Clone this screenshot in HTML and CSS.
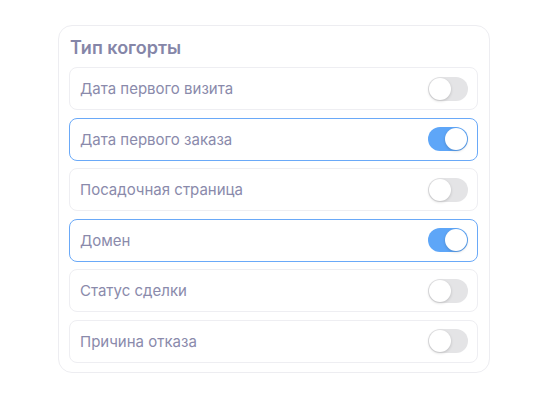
FILE: index.html
```html
<!DOCTYPE html>
<html lang="ru">
<head>
    <meta charset="UTF-8">
    <meta name="viewport" content="width=device-width, initial-scale=1.0">
    <title>Тип когорты</title>
    <link rel="stylesheet" href="styles.css">
</head>
<body>
    <div class="panel">
        <h2>Тип когорты</h2>
        <div class="option-list">
            <div class="option">
                <span>Дата первого визита</span>
                <span class="switch"></span>
            </div>
            <div class="option active">
                <span>Дата первого заказа</span>
                <span class="switch on"></span>
            </div>
            <div class="option">
                <span>Посадочная страница</span>
                <span class="switch"></span>
            </div>
            <div class="option active">
                <span>Домен</span>
                <span class="switch on"></span>
            </div>
            <div class="option">
                <span>Статус сделки</span>
                <span class="switch"></span>
            </div>
            <div class="option">
                <span>Причина отказа</span>
                <span class="switch"></span>
            </div>
        </div>
    </div>
</body>
</html>
```

FILE: styles.css
```css
body {
    font-family: Inter, "Noto Sans", sans-serif;
    margin: 0;
    padding: 25px 0 0 58px;
    background: #fff;
}
.panel {
    width: 409px;
    border: 1px solid #ededf1;
    border-radius: 14px;
    padding: 10px 11px 9px 10px;
}
.panel h2 {
    margin: 0 0 8px 1px;
    padding-top: 1px;
    font-size: 18px;
    font-weight: 600;
    color: #8586a8;
    line-height: 22px;
}
.option-list {
    display: flex;
    flex-direction: column;
    gap: 7.6px;
}
.option {
    height: 41px;
    border: 1px solid #eeeef2;
    border-radius: 8px;
    display: flex;
    align-items: center;
    justify-content: space-between;
    padding: 0 9px 0 10px;
    font-size: 15px;
    color: #8a8aab;
}
.option.active {
    border-color: #6aa9f8;
}
.switch {
    position: relative;
    width: 40px;
    height: 24px;
    border-radius: 12px;
    background: #e4e4e6;
}
.switch::after {
    content: "";
    position: absolute;
    top: 1px;
    left: 1px;
    width: 22px;
    height: 22px;
    border-radius: 50%;
    background: #fff;
    box-shadow: 0 1px 3px rgba(0, 0, 0, 0.18);
}
.switch.on {
    background: #5ea6f8;
}
.switch.on::after {
    left: 17px;
}
```
